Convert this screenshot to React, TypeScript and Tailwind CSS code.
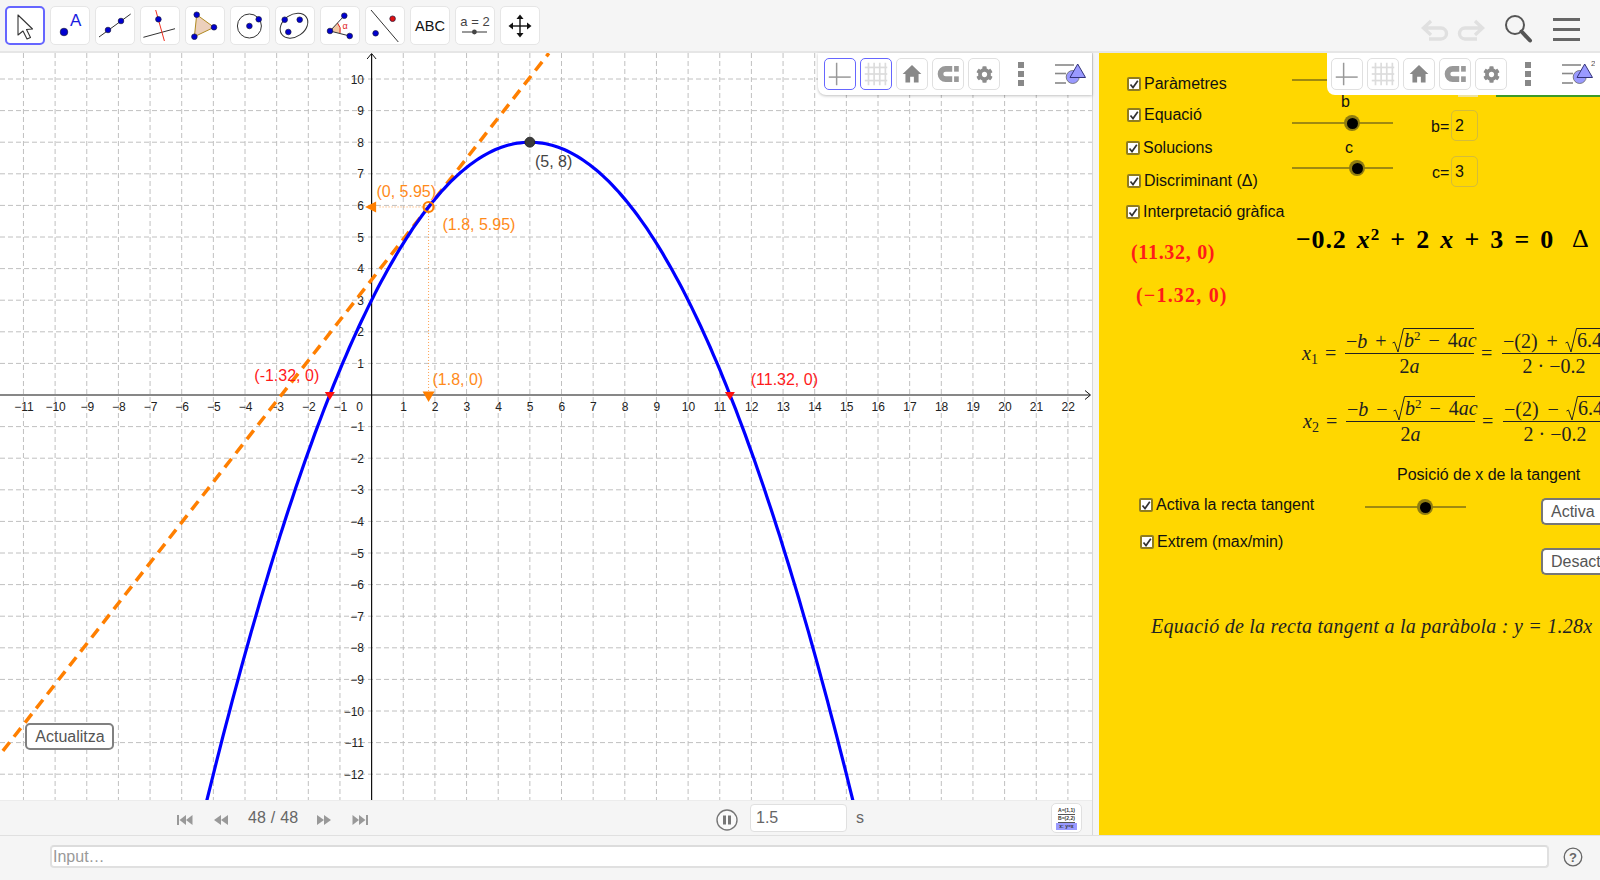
import React from "react";
import { FaCog } from "react-icons/fa";

const OX = 371.6, OY = 395, U = 31.65, UY = 31.6;
const px = (x: number) => OX + x * U;
const py = (y: number) => OY - y * UY;
const range = (a: number, b: number) => Array.from({ length: b - a + 1 }, (_, i) => a + i);

function Pt({ x, y, r = 2.8, fill = "#0000d0" }: { x: number; y: number; r?: number; fill?: string }) {
  return <circle cx={x} cy={y} r={r} fill={fill} stroke="#1a1a40" strokeWidth={0.7} />;
}

const toolIcons: React.ReactNode[] = [
  <path key="a" d="M13 9 L13 29 L18 25 L22 33 L25.5 31.5 L21.5 23.5 L27.5 23 Z" fill="#fff" stroke="#333" strokeWidth={1.1} strokeLinejoin="round" />,
  <g key="b">
    <Pt x={14} y={26} r={3.8} />
    <text x={20} y={20} fontSize={17} fill="#1a1ae0">A</text>
  </g>,
  <g key="c">
    <line x1={4} y1={31} x2={35.7} y2={8} stroke="#333" strokeWidth={1} />
    <Pt x={13} y={24} />
    <Pt x={26} y={15} />
  </g>,
  <g key="d">
    <line x1={3.4} y1={31.3} x2={35} y2={22.7} stroke="#333" strokeWidth={1} />
    <line x1={15.7} y1={4} x2={24.4} y2={35} stroke="#f03020" strokeWidth={1} />
    <Pt x={18.4} y={13.3} />
  </g>,
  <g key="e">
    <polygon points="11.7,8.7 29,21.3 9.4,30.7" fill="#ecd0bc" stroke="#b08a20" strokeWidth={1} />
    <Pt x={11.7} y={8.7} />
    <Pt x={29} y={21.3} />
    <Pt x={9.4} y={30.7} />
  </g>,
  <g key="f">
    <circle cx={19.4} cy={20} r={12} fill="none" stroke="#333" strokeWidth={1} />
    <Pt x={19.4} y={20} />
    <Pt x={28.7} y={13.3} />
  </g>,
  <g key="g">
    <ellipse cx={19} cy={19.7} rx={15} ry={11} transform="rotate(-35 19 19.7)" fill="none" stroke="#333" strokeWidth={1} />
    <Pt x={9.7} y={13.7} />
    <Pt x={24.7} y={13.7} />
    <Pt x={13.3} y={26} />
  </g>,
  <g key="h">
    <path d="M10 25 L17.5 17 A11 11 0 0 1 20 27.2 Z" fill="#f2c8a4" />
    <path d="M17.5 17 A11 11 0 0 1 20 27.2" fill="none" stroke="#e02020" strokeWidth={1} />
    <line x1={10} y1={25} x2={24.3} y2={9.7} stroke="#333" strokeWidth={1} />
    <line x1={10} y1={25} x2={29.7} y2={30} stroke="#333" strokeWidth={1} />
    <Pt x={10} y={25} />
    <Pt x={24.3} y={9.7} />
    <Pt x={29.7} y={30} />
    <text x={22.5} y={23} fontSize={9} fill="#e02020">α</text>
  </g>,
  <g key="i">
    <line x1={6} y1={4} x2={33.3} y2={36} stroke="#333" strokeWidth={1} />
    <Pt x={10.6} y={27.3} />
    <Pt x={27.6} y={12.7} fill="#e01010" />
  </g>,
  <text key="j" x={20} y={25} fontSize={14.5} textAnchor="middle" fill="#111">ABC</text>,
  <g key="k">
    <text x={20} y={19.5} fontSize={13} textAnchor="middle" fill="#444">a = 2</text>
    <line x1={7} y1={26} x2={32} y2={26} stroke="#555" strokeWidth={1.2} />
    <circle cx={19.4} cy={26} r={2.4} fill="#444" />
  </g>,
  <g key="l" fill="#111">
    <line x1={20} y1={11} x2={20} y2={29} stroke="#111" strokeWidth={1.4} />
    <line x1={11} y1={20} x2={29} y2={20} stroke="#111" strokeWidth={1.4} />
    <polygon points="20,8.5 16.5,13 23.5,13" />
    <polygon points="20,31.5 16.5,27 23.5,27" />
    <polygon points="8.5,20 13,16.5 13,23.5" />
    <polygon points="31.5,20 27,16.5 27,23.5" />
  </g>,
];

function Toolbar() {
  return (
    <div className="flex h-[53px] shrink-0 items-start border-b-2 border-[#e6e6e6] bg-[#f5f5f5] pl-[5px] pt-[6px]">
      <div className="flex gap-[5px]">
        {toolIcons.map((ic, i) => (
          <div
            key={i}
            className={
              i === 0
                ? "h-[39px] w-[40px] rounded-[5px] border-2 border-[#6666ff] bg-white"
                : "h-[39px] w-[40px] rounded-[5px] border border-[#e6e6e6] bg-white"
            }
          >
            <svg viewBox="0 0 40 39" className={i === 0 ? "-ml-[2px] -mt-[2px] h-[39px] w-[40px]" : "-ml-[1px] -mt-[1px] h-[39px] w-[40px]"}>
              {ic}
            </svg>
          </div>
        ))}
      </div>
      <div className="ml-auto mr-[20px] mt-[9px] flex items-center">
        <svg viewBox="0 0 28 22" className="h-[22px] w-[28px]" fill="none" stroke="#e0e0e0" strokeWidth={3.4}>
          <path d="M10 2 L2.5 9 L10 16 M2.5 9 H20 a5.5 5.5 0 0 1 0 11 H8" />
        </svg>
        <svg viewBox="0 0 28 22" className="ml-[8px] h-[22px] w-[28px]" fill="none" stroke="#e0e0e0" strokeWidth={3.4}>
          <path d="M18 2 L25.5 9 L18 16 M25.5 9 H8 a5.5 5.5 0 0 0 0 11 H20" />
        </svg>
        <svg viewBox="0 0 30 30" className="-mt-[1px] ml-[18px] h-[30px] w-[30px]" fill="none" stroke="#555">
          <circle cx={12} cy={11} r={9} strokeWidth={2} />
          <line x1={18.5} y1={17.5} x2={27} y2={26.5} strokeWidth={4} strokeLinecap="round" />
        </svg>
        <div className="ml-[20px] flex w-[27px] flex-col gap-[7px]">
          <div className="h-[3px] bg-[#666]" />
          <div className="h-[3px] bg-[#666]" />
          <div className="h-[3px] bg-[#666]" />
        </div>
      </div>
    </div>
  );
}

function StyleBar({ second }: { second?: boolean }) {
  const btn = "flex h-[32px] w-[32px] items-center justify-center rounded-[5px] border bg-white";
  const on = second ? "border-[#e0e0e0]" : "border-[#6666ff]";
  return (
    <div className={second ? "absolute right-0 top-0 z-10 flex h-[42px] w-[273px] items-start rounded-bl-[8px] bg-white pl-[4px] pt-[5px]" : "absolute right-0 top-0 z-10 flex h-[42px] w-[274px] items-start rounded-bl-[8px] bg-white pl-[6px] pt-[5px] shadow-[0_1px_3px_rgba(0,0,0,0.25)]"}>
      <div className="flex gap-[4px]">
        <div className={`${btn} ${on}`}>
          <svg viewBox="0 0 32 32" className="h-[32px] w-[32px]" stroke="#999" strokeWidth={1.6}>
            <line x1={12.4} y1={4} x2={12.4} y2={28} />
            <line x1={4} y1={19.3} x2={27.4} y2={19.3} />
          </svg>
        </div>
        <div className={`${btn} ${on}`}>
          <svg viewBox="0 0 32 32" className="h-[32px] w-[32px]" stroke="#dcdcdc" strokeWidth={1.8}>
            <line x1={8} y1={4} x2={8} y2={28} />
            <line x1={14} y1={4} x2={14} y2={28} />
            <line x1={20} y1={4} x2={20} y2={28} />
            <line x1={26} y1={4} x2={26} y2={28} />
            <line x1={4} y1={9} x2={28} y2={9} />
            <line x1={4} y1={16} x2={28} y2={16} />
            <line x1={4} y1={23} x2={28} y2={23} />
          </svg>
        </div>
        <div className={`${btn} border-[#e0e0e0]`}>
          <svg viewBox="0 0 32 32" className="h-[32px] w-[32px]" fill="#888">
            <path d="M16 6.5 L26 16 H23 V25 H18 V19 H14 V25 H9 V16 H6 Z" />
          </svg>
        </div>
        <div className={`${btn} border-[#e0e0e0]`}>
          <svg viewBox="0 0 32 32" className="h-[32px] w-[32px]" fill="none">
            <path d="M20.5 10.5 H13.5 a5.5 5.5 0 0 0 0 11 H20.5" stroke="#999" strokeWidth={6} />
            <rect x={22.5} y={7.5} width={5} height={6} fill="#999" />
            <rect x={22.5} y={18.5} width={5} height={6} fill="#999" />
          </svg>
        </div>
        <div className={`${btn} border-[#e0e0e0]`}>
          <FaCog className="h-[17px] w-[17px] text-[#8c8c8c]" />
        </div>
      </div>
      <div className="ml-[18px] mt-[4px] flex w-[6px] flex-col gap-[3px]">
        <div className="h-[6px] bg-[#888]" />
        <div className="h-[6px] bg-[#888]" />
        <div className="h-[6px] bg-[#888]" />
      </div>
      <svg viewBox="0 0 34 32" className="ml-[30px] h-[32px] w-[34px]">
        <g stroke="#888" strokeWidth={1.6}>
          <line x1={1} y1={7} x2={20} y2={7} />
          <line x1={1} y1={15.5} x2={12} y2={15.5} />
          <line x1={1} y1={25} x2={12} y2={25} />
        </g>
        <circle cx={18.7} cy={19} r={6.5} fill="#9a9aff" stroke="#666" strokeWidth={0.8} />
        <polygon points="23.7,6 31.5,19.5 16,19.5" fill="#9a9aff" stroke="#33337a" strokeWidth={1} />
        {second && <text x={30} y={8} fontSize={8} fill="#555">2</text>}
      </svg>
    </div>
  );
}

function Chart() {
  const xs = range(-11, 22);
  const ys = range(-12, 10);
  const curve = range(-70, 180)
    .map((i) => {
      const x = i / 10;
      return `${px(x).toFixed(1)},${py(-0.2 * x * x + 2 * x + 3).toFixed(1)}`;
    })
    .join(" ");
  const tx = 1.8, ty = 5.95;
  const t = (x: number) => 1.28 * x + 3.648;
  return (
    <svg viewBox="0 53 1092 747" className="block h-[747px] w-[1092px]" fontFamily="'Liberation Sans', Arial, sans-serif">
      <g stroke="#c0c0c0" strokeWidth={1} strokeDasharray="5 3">
        {range(-11, 23).filter((x) => x !== 0).map((x) => (
          <line key={x} x1={px(x)} y1={53} x2={px(x)} y2={800} />
        ))}
        {range(-12, 10).filter((y) => y !== 0).map((y) => (
          <line key={y} x1={0} y1={py(y)} x2={1092} y2={py(y)} />
        ))}
      </g>
      <line x1={0} y1={OY} x2={1090} y2={OY} stroke="#111" strokeWidth={1.2} />
      <line x1={OX} y1={54} x2={OX} y2={800} stroke="#111" strokeWidth={1.2} />
      <path d={`M1085 ${OY - 4.5} L1090.5 ${OY} L1085 ${OY + 4.5}`} fill="none" stroke="#111" />
      <path d={`M${OX - 4.5} 59 L${OX} 53.5 L${OX + 4.5} 59`} fill="none" stroke="#111" />
      {xs.filter((x) => x !== 0).map((x) => (
        <text key={x} x={px(x) + (x < 0 ? 0.5 : 0.3)} y={411} fontSize={12} textAnchor="middle" fill="#222">
          {x < 0 ? `\u2212${-x}` : x}
        </text>
      ))}
      <text x={359.7} y={411} fontSize={12} textAnchor="middle" fill="#222">0</text>
      {ys.filter((y) => y !== 0).map((y) => (
        <text key={y} x={364} y={py(y) + 4.5} fontSize={12} textAnchor="end" fill="#222">
          {y < 0 ? `\u2212${-y}` : y}
        </text>
      ))}
      <line x1={px(tx)} y1={py(ty)} x2={OX + 6} y2={py(ty)} stroke="#ffa050" strokeWidth={1} strokeDasharray="1 2" />
      <line x1={px(tx)} y1={py(ty)} x2={px(tx)} y2={OY} stroke="#ffa050" strokeWidth={1} strokeDasharray="1 2" />
      <line x1={px(-12)} y1={py(t(-12))} x2={px(5.6)} y2={py(t(5.6))} stroke="#ff7f00" strokeWidth={3.5} strokeDasharray="11 7" />
      <polyline points={curve} fill="none" stroke="#0000ff" strokeWidth={3.2} />
      <circle cx={px(tx)} cy={py(ty)} r={5} fill="none" stroke="#ff7f00" strokeWidth={2.2} />
      <polygon points={`${OX - 6.5},${py(ty)} ${OX + 4.5},${py(ty) - 5.5} ${OX + 4.5},${py(ty) + 5.5}`} fill="#ff7f00" />
      <polygon points={`${px(tx) - 6},${OY - 3.5} ${px(tx) + 6},${OY - 3.5} ${px(tx)},${OY + 7}`} fill="#ff7f00" />
      <polygon points={`${px(-1.32) - 5},${OY - 3} ${px(-1.32) + 5},${OY - 3} ${px(-1.32)},${OY + 5}`} fill="#ff1010" />
      <polygon points={`${px(11.32) - 5},${OY - 3} ${px(11.32) + 5},${OY - 3} ${px(11.32)},${OY + 5}`} fill="#ff1010" />
      <circle cx={px(5)} cy={py(8)} r={5} fill="#3c3c3c" stroke="#222" strokeWidth={0.8} />
      <text x={535} y={166.5} fontSize={16} fill="#444">(5, 8)</text>
      <text x={376.5} y={196.5} fontSize={16} fill="#ff8a1a">(0, 5.95)</text>
      <text x={442.5} y={229.5} fontSize={16} fill="#ff8a1a">(1.8, 5.95)</text>
      <text x={432.5} y={385} fontSize={16} fill="#ff8a1a">(1.8, 0)</text>
      <text x={254.3} y={380.5} fontSize={16} fill="#ff1a1a">(-1.32, 0)</text>
      <text x={750.7} y={384.5} fontSize={16} fill="#ff1a1a">(11.32, 0)</text>
    </svg>
  );
}

function NavIcon({ kind }: { kind: 0 | 1 | 2 | 3 }) {
  const back = kind < 2;
  const bar = kind === 0 || kind === 3;
  return (
    <svg viewBox="0 0 18 12" className="mt-[3px] h-[12px] w-[18px]" fill="#999">
      <g transform={back ? "" : "translate(18 0) scale(-1 1)"}>
        {bar && <rect x={1} y={1} width={2} height={10} />}
        <polygon points={bar ? "3.5,6 10,1 10,11" : "2,6 9,1 9,11"} />
        <polygon points={bar ? "10,6 16.5,1 16.5,11" : "9,6 16,1 16,11"} />
      </g>
    </svg>
  );
}

function PlayBar() {
  return (
    <div className="flex h-[35px] items-center border-t border-[#ececec] bg-[#f5f5f5] pl-[176px] text-[16px] text-[#666]">
      <div className="flex items-center gap-[18px]">
        <NavIcon kind={0} />
        <NavIcon kind={1} />
        <span className="w-[49px] whitespace-nowrap tracking-[0.2px]">48 / 48</span>
        <NavIcon kind={2} />
        <NavIcon kind={3} />
      </div>
      <svg viewBox="0 0 22 22" className="ml-[347px] mt-[3px] h-[22px] w-[22px]">
        <circle cx={11} cy={11} r={10} fill="#fafafa" stroke="#777" strokeWidth={1.4} />
        <rect x={7} y={6.5} width={3} height={9} fill="#777" />
        <rect x={12} y={6.5} width={3} height={9} fill="#777" />
      </svg>
      <div className="ml-[12px] flex h-[28px] w-[97px] items-center rounded-[4px] border border-[#e0e0e0] bg-white pl-[5px]">1.5</div>
      <span className="ml-[9px]">s</span>
      <div className="ml-auto mr-[10px] flex h-[30px] w-[31px] flex-col items-center justify-center rounded-[5px] border border-[#e0e0e0] bg-white text-[5px] leading-[7px] text-[#333]">
        <span className="border-b border-[#555] font-bold">A=(1,1)</span>
        <span className="border-b border-[#555] font-bold">B=(2,2)</span>
        <span className="w-[21px] bg-[#9a9aff] text-center font-bold">x: y=x</span>
      </div>
    </div>
  );
}

function Check({ className, label }: { className: string; label: string }) {
  return (
    <div className={`absolute flex h-[20px] items-center gap-[3px] whitespace-nowrap text-[16px] text-[#111] ${className}`}>
      <span className="flex h-[14px] w-[14px] shrink-0 items-center justify-center rounded-[2px] border-2 border-[#8f7c20] bg-white">
        <svg viewBox="0 0 10 10" className="h-[11px] w-[11px]" fill="none" stroke="#333" strokeWidth={1.7}>
          <path d="M1.5 5 L4 8 L8.8 1.2" />
        </svg>
      </span>
      {label}
    </div>
  );
}

function Slider({ className, pos }: { className: string; pos: string }) {
  return (
    <div className={`absolute h-[2px] w-[101px] bg-[#a08a10] ${className}`}>
      <span className={`absolute -top-[7px] flex h-[16px] w-[16px] items-center justify-center rounded-full bg-[#8f7c10] ${pos}`}>
        <span className="h-[11px] w-[11px] rounded-full bg-black" />
      </span>
    </div>
  );
}

function Radical({ children, w }: { children: React.ReactNode; w: string }) {
  return (
    <span className="inline-flex items-start">
      <svg viewBox="0 0 12 25" className="h-[25px] w-[12px] shrink-0" fill="none" stroke="#222" strokeWidth={1}>
        <path d="M0.5 15 L2.5 14 L6 24 L11.5 0.5 L12 0.5" />
      </svg>
      <span className={`whitespace-nowrap border-t border-[#222] text-left leading-[23px] ${w}`}>{children}</span>
    </span>
  );
}

function Formula({ className, sub, sign }: { className: string; sub: string; sign: string }) {
  return (
    <div className={`absolute flex h-[60px] items-center whitespace-nowrap font-['Liberation_Serif',serif] text-[20px] text-[#222] ${className}`}>
      <span className="w-[23px] italic">
        x<sub className="text-[14px] not-italic">{sub}</sub>
      </span>
      <span className="w-[20px]">=</span>
      <div className="flex w-[129px] flex-col items-start">
        <div className="flex h-[25px] items-end pl-[1px] leading-[23px]">
          <span className="w-[46px] [word-spacing:3px]">−<i>b</i> {sign}</span>
          <Radical w="w-[70px] [word-spacing:3px]"><i>b</i><sup className="text-[13px]">2</sup> − 4<i>ac</i></Radical>
        </div>
        <div className="h-px w-full bg-[#222]" />
        <div className="h-[25px] self-center leading-[25px]">2<i>a</i></div>
      </div>
      <span className="ml-[7px] w-[21px]">=</span>
      <div className="flex w-[104px] flex-col items-start">
        <div className="flex h-[25px] items-end pl-[1px] leading-[23px]">
          <span className="w-[62px] [word-spacing:4px]">−(2) {sign}</span>
          <Radical w="w-[40px]">6.4</Radical>
        </div>
        <div className="h-px w-full bg-[#222]" />
        <div className="h-[25px] self-center leading-[25px]">2 · −0.2</div>
      </div>
    </div>
  );
}

function Panel() {
  const small = "absolute h-[20px] leading-[20px] text-[16px] text-[#111] whitespace-nowrap";
  const box = "absolute flex h-[31px] w-[27px] items-center rounded-[5px] border border-[#d4bc3a] pl-[3px] text-[16px] text-[#111]";
  const btn = "absolute flex h-[27px] w-[70px] items-center rounded-l-[5px] border-2 border-r-0 border-[#777] bg-white pl-[8px] text-[16px] text-[#555]";
  return (
    <div className="relative flex-1 overflow-hidden bg-[#ffd700]">
      <StyleBar second />
      <div className="absolute left-[397px] top-[42px] h-[2px] w-[104px] bg-[#3c9a28]" />
      <div className="absolute left-[359px] top-[42px] h-[2px] w-[20px] bg-[#ede2a0]" />
      <div className="absolute left-[193px] top-[26px] h-[2px] w-[60px] bg-[#a08a10]" />

      <Check className="left-[28px] top-[21px]" label="Paràmetres" />
      <Check className="left-[28px] top-[52px]" label="Equació" />
      <Check className="left-[27px] top-[85px]" label="Solucions" />
      <Check className="left-[28px] top-[118px]" label="Discriminant (Δ)" />
      <Check className="left-[27px] top-[149px]" label="Interpretació gràfica" />

      <span className={`${small} left-[242px] top-[39px]`}>b</span>
      <Slider className="left-[193px] top-[69px]" pos="left-[52px]" />
      <span className={`${small} left-[332px] top-[64px]`}>b=</span>
      <div className={`${box} left-[352px] top-[57px]`}>2</div>
      <span className={`${small} left-[246px] top-[85px]`}>c</span>
      <Slider className="left-[193px] top-[114px]" pos="left-[57px]" />
      <span className={`${small} left-[333px] top-[110px]`}>c=</span>
      <div className={`${box} left-[352px] top-[103px]`}>3</div>

      <div className="absolute left-[197px] top-[170px] flex h-[34px] items-center whitespace-nowrap font-['Liberation_Serif',serif] text-[26px] font-bold leading-[34px] tracking-[0.8px] text-black [word-spacing:3px]">
        <span>−0.2 <i>x</i><sup className="text-[17px]">2</sup> + 2 <i>x</i> + 3 = 0</span>
      </div>
      <span className="absolute left-[473px] top-[169px] font-['Liberation_Serif',serif] text-[26px] leading-[34px] text-black">Δ</span>
      <div className="absolute left-[32px] top-[187px] whitespace-nowrap font-['Liberation_Serif',serif] text-[20px] font-bold leading-[24px] tracking-[0.7px] text-[#ff1a1a]">(11.32, 0)</div>
      <div className="absolute left-[37px] top-[230px] whitespace-nowrap font-['Liberation_Serif',serif] text-[20px] font-bold leading-[24px] tracking-[1.2px] text-[#ff1a1a]">(−1.32, 0)</div>

      <Formula className="left-[203px] top-[270px]" sub="1" sign="+" />
      <Formula className="left-[204px] top-[338px]" sub="2" sign="−" />

      <span className={`${small} left-[298px] top-[412px]`}>Posició de x de la tangent</span>
      <Check className="left-[40px] top-[442px]" label="Activa la recta tangent" />
      <Check className="left-[41px] top-[479px]" label="Extrem (max/min)" />
      <Slider className="left-[266px] top-[453px]" pos="left-[52px]" />
      <div className={`${btn} left-[442px] top-[445px]`}>Activa</div>
      <div className={`${btn} left-[442px] top-[495px]`}>Desactiva</div>

      <div className="absolute left-[52px] top-[560px] whitespace-nowrap font-['Liberation_Serif',serif] text-[20px] italic leading-[26px] tracking-[0.25px] text-[#222]">
        Equació de la recta tangent a la paràbola : y = 1.28x
      </div>
    </div>
  );
}

export default function App() {
  return (
    <div className="flex h-[880px] w-[1600px] flex-col overflow-hidden bg-[#f5f5f5] font-['Liberation_Sans',Arial,sans-serif]">
      <Toolbar />
      <div className="flex h-[782px] min-h-0">
        <div className="flex w-[1092px] flex-col">
          <div className="relative h-[747px] bg-white">
            <Chart />
            <StyleBar />
            <button className="absolute left-[25px] top-[670px] flex h-[27px] w-[89px] items-center justify-center rounded-[5px] border-2 border-[#808080] bg-white pl-[1px] text-[16px] text-[#555]">
              Actualitza
            </button>
          </div>
          <PlayBar />
        </div>
        <div className="w-[7px] border-l border-[#d8d8d8] bg-[#f5f5f5]" />
        <Panel />
      </div>
      <div className="flex h-[45px] items-start border-t border-[#e0e0e0] bg-[#f5f5f5] pl-[50px] pt-[9px]">
        <div className="flex h-[23px] w-[1499px] items-center rounded-[4px] border-2 border-t-[#dcdcdc] border-x-[#e0e0e0] border-b-[#e0e0e0] bg-white pl-[1px] text-[16px] text-[#999]">
          Input…
        </div>
        <svg viewBox="0 0 20 20" className="ml-[14px] mt-[2px] h-[20px] w-[20px]">
          <circle cx={10} cy={10} r={8.8} fill="none" stroke="#666" strokeWidth={1.3} />
          <text x={10} y={14.5} fontSize={13} textAnchor="middle" fill="#666" fontWeight="bold">?</text>
        </svg>
      </div>
    </div>
  );
}
